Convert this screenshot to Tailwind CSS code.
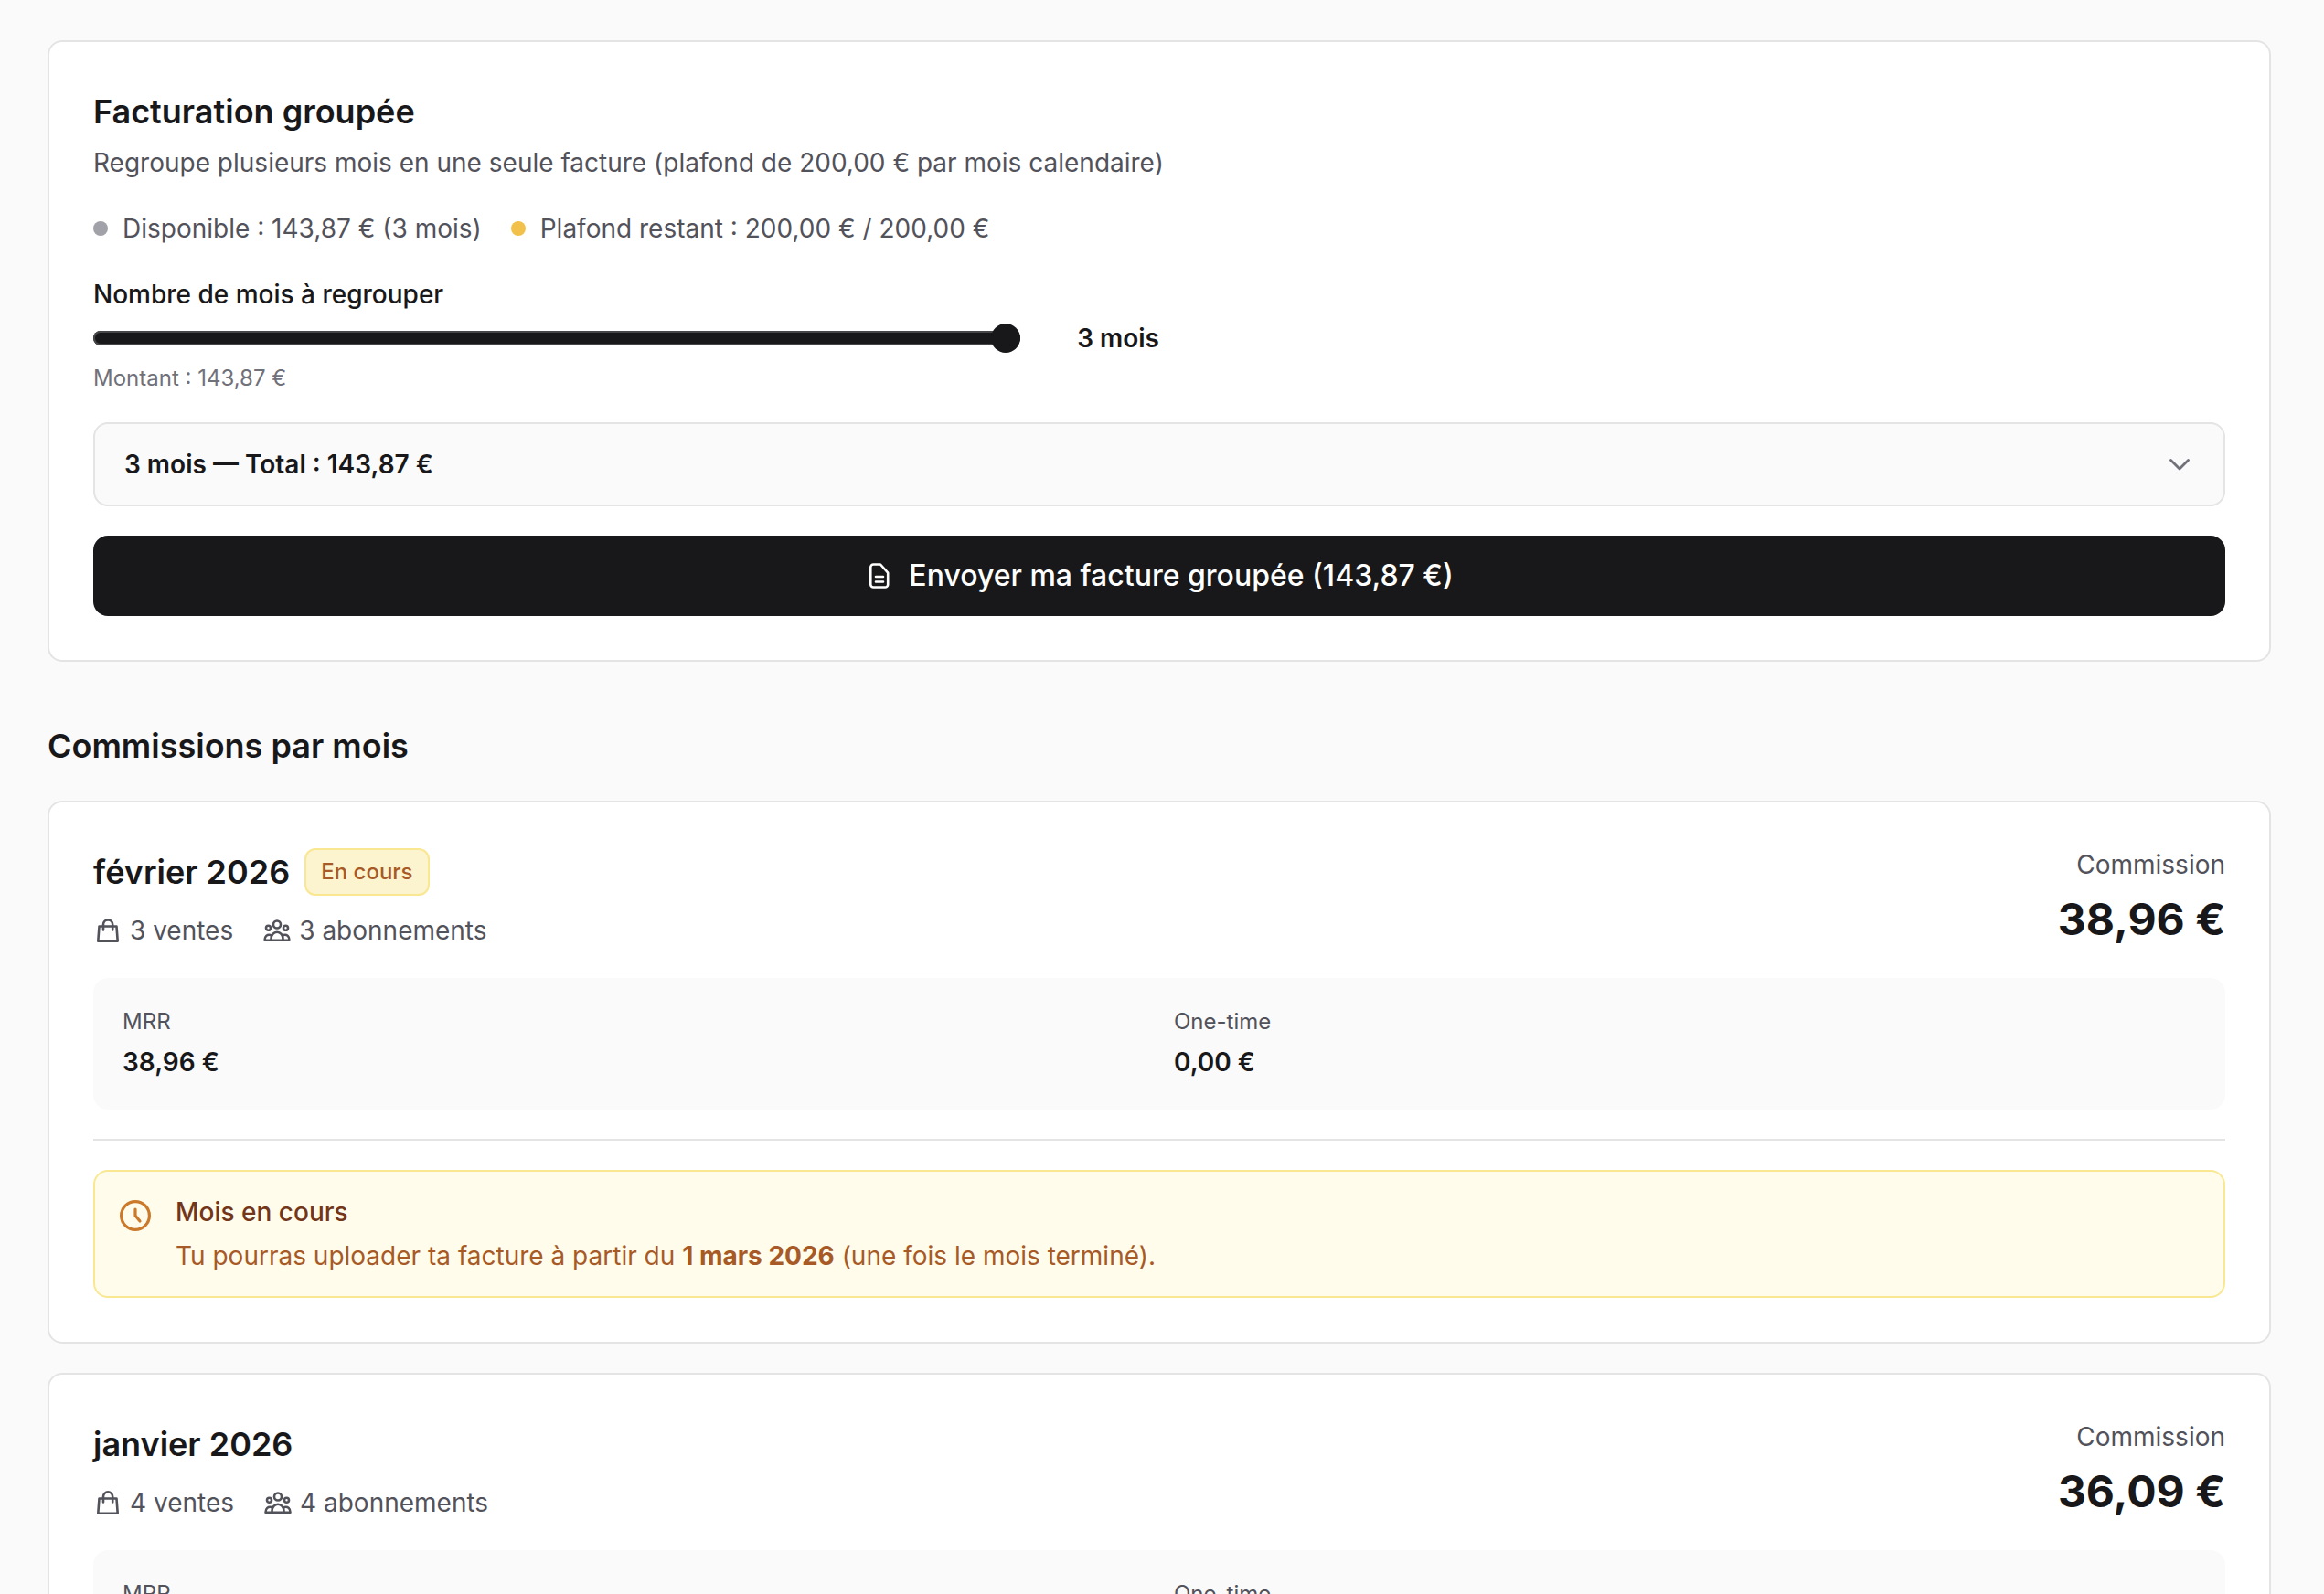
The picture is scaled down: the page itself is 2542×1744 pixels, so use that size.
<!DOCTYPE html>
<html lang="fr">
<head>
    <meta charset="UTF-8">
    <meta name="viewport" content="width=device-width, initial-scale=1.0">
    <title>Commissions</title>

    <!-- Tailwind CSS -->
    <script src="https://cdn.jsdelivr.net/npm/@tailwindcss/browser@4"></script>

    <style>
        body {
            font-family: 'Inter', sans-serif;
        }
    </style>
</head>
<body class="bg-[#fafafa] text-[#18181a]">
    <!-- Shared icons -->
    <svg class="hidden" aria-hidden="true">
        <symbol id="icon-bag" viewBox="0 0 32 32" fill="none" stroke="currentColor" stroke-width="2.6" stroke-linecap="round" stroke-linejoin="round">
            <path d="M6.500 11.500h19l1.200 16.200H5.300z" />
            <path d="M11 15.500v-6a5.100 5.100 0 0 1 10.200 0v6" />
        </symbol>
        <symbol id="icon-users" viewBox="0 0 32 32" fill="none" stroke="currentColor" stroke-width="2.6" stroke-linecap="round" stroke-linejoin="round">
            <circle cx="16" cy="9.500" r="4" />
            <circle cx="6.500" cy="13.300" r="2.500" />
            <circle cx="25.500" cy="13.300" r="2.500" />
            <path d="M9.500 26.700v-1.700a6.500 7.300 0 0 1 13 0v1.700z" />
            <path d="M9 21C5 20 2.500 22.500 2.500 26.700h7" />
            <path d="M23 21C27 20 29.500 22.500 29.500 26.700h-7" />
        </symbol>
    </svg>

    <main class="h-screen overflow-hidden pt-11 pl-[52px] pr-[58px]">
        <!-- Facturation groupée -->
        <section class="flex flex-col gap-8 bg-white border-2 border-[#e4e4e4] rounded-2xl p-12">
            <div>
                <h2 class="text-[36px] leading-[56px] font-semibold">Facturation groupée</h2>
                <p class="mt-2 text-[28px] leading-[40px] text-[#52525b]">Regroupe plusieurs mois en une seule facture (plafond de 200,00 € par mois calendaire)</p>
            </div>

            <div class="flex gap-8 text-[28px] leading-[40px] text-[#52525b]">
                <div class="flex items-center gap-4">
                    <span class="size-4 rounded-full bg-[#a1a1aa]"></span>
                    <span>Disponible : 143,87 € (3 mois)</span>
                </div>
                <div class="flex items-center gap-4">
                    <span class="size-4 rounded-full bg-[#f2c14b]"></span>
                    <span>Plafond restant : 200,00 € / 200,00 €</span>
                </div>
            </div>

            <div class="flex flex-col gap-2 w-1/2">
                <label for="months" class="text-[28px] leading-[40px] font-medium">Nombre de mois à regrouper</label>
                <div class="flex items-center gap-8">
                    <input type="range" id="months" name="months" min="1" max="3" value="3"
                        class="appearance-none block flex-1 min-w-0 h-4 rounded-full bg-[#18181a] inset-ring-2 inset-ring-[#464648] [&::-webkit-slider-thumb]:appearance-none [&::-webkit-slider-thumb]:size-8 [&::-webkit-slider-thumb]:rounded-full [&::-webkit-slider-thumb]:bg-[#18181a]">
                    <output for="months" class="w-[120px] text-right text-[28px] leading-[40px] font-semibold">3 mois</output>
                </div>
                <p class="text-[24px] leading-[32px] text-[#71717a]">Montant : 143,87 €</p>
            </div>

            <button type="button" aria-expanded="false" class="w-full flex items-center justify-between px-8 py-6 bg-[#fafafa] border-2 border-[#e4e4e4] rounded-2xl">
                <span class="text-[28px] leading-[40px] font-semibold">3 mois — Total : 143,87 €</span>
                <svg class="size-8 text-[#71717a]" viewBox="0 0 32 32" fill="none" stroke="currentColor" stroke-width="2.800" stroke-linecap="round" stroke-linejoin="round">
                    <path d="M25.500 11.500L16 21L6.500 11.500" />
                </svg>
            </button>

            <button type="button" class="w-full flex items-center justify-center gap-4 py-5 bg-[#18181a] rounded-2xl text-white text-[32px] leading-[48px] font-medium">
                <svg class="size-8" viewBox="0 0 32 32" fill="none" stroke="currentColor" stroke-width="2.600" stroke-linecap="round" stroke-linejoin="round">
                    <path d="M8.300 3.500h7.700l8.200 9.200v12.800a3 3 0 0 1-3 3h-12.900a3 3 0 0 1-3-3v-19a3 3 0 0 1 3-3z" transform="translate(1 0)" />
                    <path d="M12 17h8M12 22.500h8" />
                </svg>
                Envoyer ma facture groupée (143,87 €)
            </button>
        </section>

        <!-- Commissions par mois -->
        <h2 class="mt-16 text-[36px] leading-[56px] font-semibold">Commissions par mois</h2>

        <div class="mt-8 flex flex-col gap-8">
            <!-- Février -->
            <article class="flex flex-col gap-8 bg-white border-2 border-[#e4e4e4] rounded-2xl p-12">
                <div class="flex justify-between">
                    <div>
                        <div class="flex items-center gap-4">
                            <h3 class="text-[36px] leading-[56px] font-semibold">février 2026</h3>
                            <span class="px-4 py-1 bg-[#fcf3cf] border-2 border-[#fae792] rounded-xl text-[24px] leading-[40px] font-medium text-[#a75a26]">En cours</span>
                        </div>
                        <div class="mt-4 flex gap-8 text-[28px] leading-[40px] text-[#52525b]">
                            <span class="flex items-center gap-2">
                                <svg class="size-8"><use href="#icon-bag" /></svg>
                                3 ventes
                            </span>
                            <span class="flex items-center gap-2">
                                <svg class="size-8"><use href="#icon-users" /></svg>
                                3 abonnements
                            </span>
                        </div>
                    </div>
                    <div class="text-right">
                        <p class="text-[28px] leading-[40px] text-[#52525b]">Commission</p>
                        <p class="mt-2 text-[48px] leading-[64px] font-bold">38,96 €</p>
                    </div>
                </div>

                <dl class="grid grid-cols-2 gap-8 p-8 bg-[#fafafa] rounded-2xl">
                    <div>
                        <dt class="text-[24px] leading-[32px] text-[#52525b]">MRR</dt>
                        <dd class="mt-2 text-[28px] leading-[40px] font-semibold">38,96 €</dd>
                    </div>
                    <div>
                        <dt class="text-[24px] leading-[32px] text-[#52525b]">One-time</dt>
                        <dd class="mt-2 text-[28px] leading-[40px] font-semibold">0,00 €</dd>
                    </div>
                </dl>

                <div class="border-t-2 border-[#e4e4e4] pt-8">
                    <div class="flex items-start gap-6 p-6 bg-[#fffcec] border-2 border-[#fae792] rounded-2xl">
                        <svg class="mt-1 size-10 shrink-0 text-[#cb7a2c]" viewBox="0 0 40 40" fill="none" stroke="currentColor" stroke-width="3.200" stroke-linecap="round" stroke-linejoin="round">
                            <circle cx="20" cy="20" r="15.400" />
                            <path d="M20 13v7l5 6" />
                        </svg>
                        <div class="text-[28px] leading-[40px]">
                            <p class="font-medium text-[#733619]">Mois en cours</p>
                            <p class="mt-2 text-[#a75a26]">Tu pourras uploader ta facture à partir du <strong class="font-bold">1 mars 2026</strong> (une fois le mois terminé).</p>
                        </div>
                    </div>
                </div>
            </article>

            <!-- Janvier -->
            <article class="flex flex-col gap-8 bg-white border-2 border-[#e4e4e4] rounded-2xl p-12">
                <div class="flex justify-between">
                    <div>
                        <h3 class="text-[36px] leading-[56px] font-semibold">janvier 2026</h3>
                        <div class="mt-4 flex gap-8 text-[28px] leading-[40px] text-[#52525b]">
                            <span class="flex items-center gap-2">
                                <svg class="size-8"><use href="#icon-bag" /></svg>
                                4 ventes
                            </span>
                            <span class="flex items-center gap-2">
                                <svg class="size-8"><use href="#icon-users" /></svg>
                                4 abonnements
                            </span>
                        </div>
                    </div>
                    <div class="text-right">
                        <p class="text-[28px] leading-[40px] text-[#52525b]">Commission</p>
                        <p class="mt-2 text-[48px] leading-[64px] font-bold">36,09 €</p>
                    </div>
                </div>

                <div class="grid grid-cols-2 gap-8 p-8 bg-[#fafafa] rounded-2xl text-[24px] leading-[32px] text-[#52525b]">
                    <p>MRR</p>
                    <p>One-time</p>
                </div>
            </article>
        </div>
    </main>
</body>
</html>
